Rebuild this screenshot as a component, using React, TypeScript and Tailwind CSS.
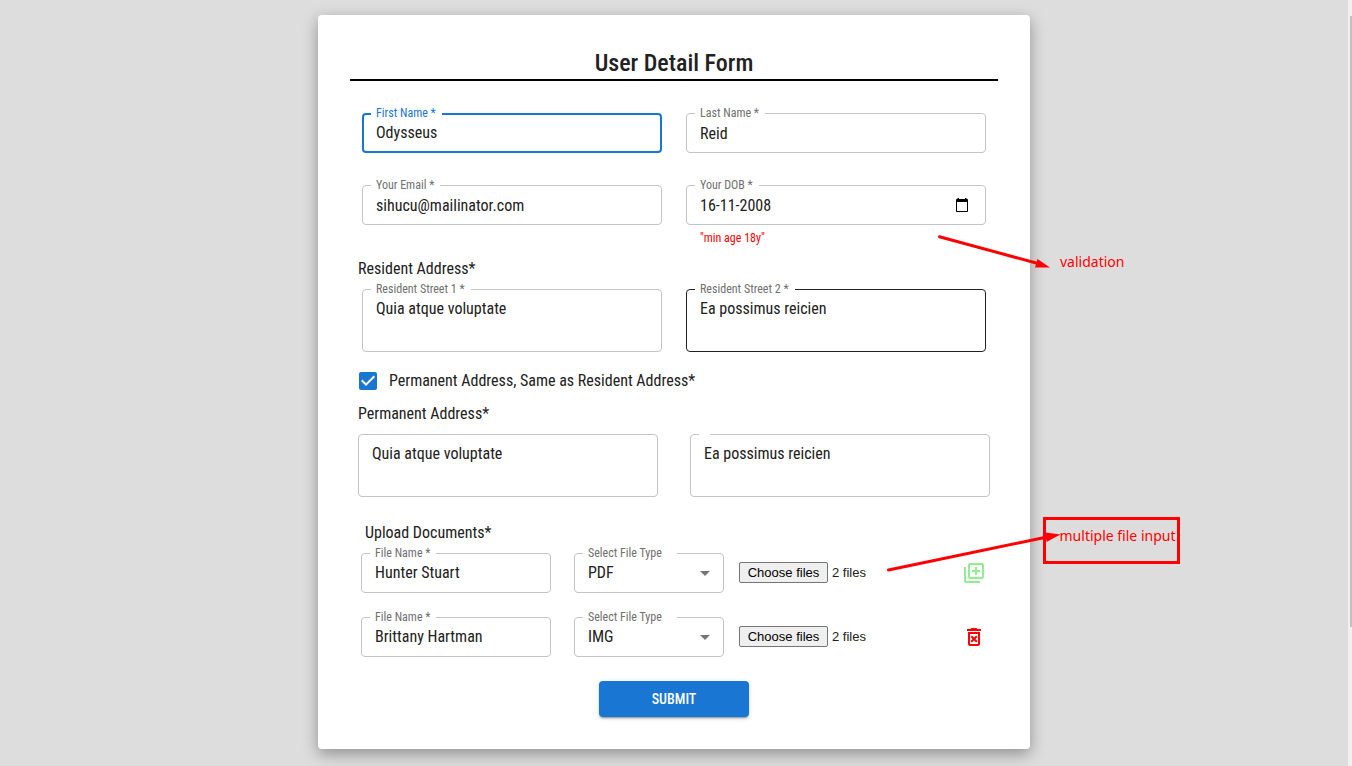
import { useId, type ReactNode } from 'react';
import { MdArrowDropDown, MdOutlineDeleteForever, MdOutlineLibraryAdd } from 'react-icons/md';

type Tone = 'idle' | 'focus' | 'hover';

const frameTone: Record<Tone, string> = {
  idle: 'border border-[#c4c4c4] px-2',
  focus: 'border-2 border-[#1976d2] px-[7px]',
  hover: 'border border-[#212121] px-2',
};

function Frame({
  id,
  label,
  tone = 'idle',
  wideNotch = false,
  children,
}: {
  id: string;
  label?: string;
  tone?: Tone;
  wideNotch?: boolean;
  children: ReactNode;
}) {
  return (
    <fieldset className={`min-w-0 rounded-[4px] ${frameTone[tone]}`}>
      {label !== undefined && (
        <legend
          className={`pl-[5px] text-xs leading-3 ${wideNotch ? 'pr-[15px]' : 'pr-[6px]'} ${
            tone === 'focus' ? 'h-[14px] text-[#1976d2]' : 'h-3 text-[#707070]'
          }`}
        >
          <label htmlFor={id} className="block">{label}</label>
        </legend>
      )}
      {children}
    </fieldset>
  );
}

function TextField({ label, value, tone, type = 'text' }: { label: string; value: string; tone?: Tone; type?: string }) {
  const id = useId();
  return (
    <Frame id={id} label={label} tone={tone}>
      <input
        id={id}
        type={type}
        defaultValue={value}
        className={`block w-full bg-transparent px-[5px] outline-none ${tone === 'focus' ? 'mb-1.5 h-6' : 'mb-[5px] h-7'}`}
      />
    </Frame>
  );
}

function DateField({ label, value }: { label: string; value: string }) {
  const id = useId();
  return (
    <Frame id={id} label={label}>
      <div className="mb-[5px] flex h-7 items-center pr-2">
        <input id={id} type="text" defaultValue={value} className="h-7 min-w-0 flex-1 bg-transparent px-[5px] outline-none" />
        <button type="button" aria-label="Open calendar" className="text-black">
          <svg width="14" height="14" viewBox="0 0 14 14" fill="currentColor" className="block">
            <path
              fillRule="evenodd"
              d="M2.500 0H4v1h6V0h1.500v1h.5c.6 0 1 .4 1 1v11c0 .6-.4 1-1 1H2c-.6 0-1-.4-1-1V2c0-.6.4-1 1-1h.5zM2 4v9h10V4z"
            />
          </svg>
        </button>
      </div>
    </Frame>
  );
}

function AreaField({ label, name, value, tone }: { label?: string; name: string; value: string; tone?: Tone }) {
  const id = useId();
  return (
    <Frame id={id} label={label} tone={tone}>
      <textarea
        id={id}
        aria-label={name}
        defaultValue={value}
        className={`block h-[54px] w-full resize-none bg-transparent px-[5px] leading-6 outline-none ${
          label === undefined ? 'mt-[7px]' : 'mt-[2px]'
        }`}
      />
    </Frame>
  );
}

function FileRow({ name, kind, action }: { name: string; kind: string; action: ReactNode }) {
  const nameId = useId();
  const kindId = useId();
  const fileId = useId();
  return (
    <div className="flex pl-[11px] pr-3">
      <div className="w-[190px]">
        <Frame id={nameId} label="File Name *">
          <input id={nameId} type="text" defaultValue={name} className="mb-[7px] block h-[26px] w-full bg-transparent px-[5px] outline-none" />
        </Frame>
      </div>
      <div className="ml-[23px] w-[150px]">
        <Frame id={kindId} label="Select File Type" wideNotch>
          <div className="relative">
            <select id={kindId} defaultValue={kind} className="mb-[5px] block h-7 w-full appearance-none bg-transparent px-[5px] outline-none">
              <option>PDF</option>
              <option>IMG</option>
            </select>
            <MdArrowDropDown className="pointer-events-none absolute -right-[2px] top-[2px] size-6 text-[#757575]" />
          </div>
        </Frame>
      </div>
      <div className="ml-[15px] mt-[5px] flex flex-1 items-center gap-1 font-['Liberation_Sans',sans-serif] text-[13px] leading-4">
        <input id={fileId} type="file" multiple className="sr-only" />
        <label htmlFor={fileId} className="flex h-[21px] w-[89px] items-center justify-center rounded-[2px] border border-[#767676] bg-[#efefef] text-black">
          Choose files
        </label>
        <span>2 files</span>
      </div>
      <div className="mt-1.5 flex items-center">{action}</div>
    </div>
  );
}

export default function App() {
  return (
    <div className="flex min-h-screen bg-[#dddddd] font-['Roboto_Condensed','Liberation_Sans_Narrow',sans-serif] text-base text-[#212121]">
      <main className="flex-1 pb-[17px] pt-[15px]">
        <div className="relative mx-auto w-full max-w-[712px] rounded-[4px] bg-white p-8 shadow-[0_5px_15px_rgba(0,0,0,0.35)]">
          <form>
            <h1 className="border-b-2 border-black text-center text-2xl font-medium leading-8">User Detail Form</h1>

            <div className="mt-[26px] grid grid-cols-2 gap-x-6 gap-y-[26px] px-3">
              <TextField label="First Name *" value="Odysseus" tone="focus" />
              <TextField label="Last Name *" value="Reid" />
              <TextField label="Your Email *" value="sihucu@mailinator.com" type="email" />
              <DateField label="Your DOB *" value="16-11-2008" />
            </div>
            <div className="mt-[3px] grid grid-cols-2 gap-x-6 px-3">
              <p className="col-start-2 pl-3.5 text-xs leading-5 text-[#ff0000]">"min age 18y"</p>
            </div>

            <h2 className="mt-[9px] px-2 leading-6">Resident Address*</h2>
            <div className="mt-[2px] grid grid-cols-2 gap-x-6 px-3">
              <AreaField label="Resident Street 1 *" name="Resident Street 1" value="Quia atque voluptate" />
              <AreaField label="Resident Street 2 *" name="Resident Street 2" value="Ea possimus reicien" tone="hover" />
            </div>

            <label className="mt-[17px] flex items-center gap-3 pl-[9px] leading-6">
              <span className="relative block size-[18px]">
                <input type="checkbox" defaultChecked className="peer block size-[18px] appearance-none rounded-[2px] border-2 border-[#666666] checked:border-[#1976d2] checked:bg-[#1976d2]" />
                <svg viewBox="3 3 18 18" className="pointer-events-none absolute inset-0 hidden size-[18px] fill-white peer-checked:block">
                  <path d="M10 17l-5-5 1.410-1.410L10 14.170l7.590-7.590L19 8z" />
                </svg>
              </span>
              Permanent Address, Same as Resident Address*
            </label>

            <h2 className="mt-[9px] px-2 leading-6">Permanent Address*</h2>
            <div className="mt-[2px] grid grid-cols-2 items-end gap-x-8 px-2">
              <AreaField name="Permanent Street 1" value="Quia atque voluptate" />
              <AreaField label="" name="Permanent Street 2" value="Ea possimus reicien" />
            </div>

            <h2 className="mt-6 px-[15px] leading-6">Upload Documents*</h2>
            <div className="mt-[2px] flex flex-col gap-[18px]">
              <FileRow
                name="Hunter Stuart"
                kind="PDF"
                action={
                  <button type="button" aria-label="Add document" className="text-[#90ee90]">
                    <MdOutlineLibraryAdd className="block size-6" />
                  </button>
                }
              />
              <FileRow
                name="Brittany Hartman"
                kind="IMG"
                action={
                  <button type="button" aria-label="Delete document" className="text-[#ff0000]">
                    <MdOutlineDeleteForever className="block size-6" />
                  </button>
                }
              />
            </div>

            <button
              type="submit"
              className="mx-auto mt-6 block h-9 w-[150px] rounded-[4px] bg-[#1976d2] text-sm font-medium text-white shadow-[0_3px_1px_-2px_rgba(0,0,0,0.2),0_2px_2px_rgba(0,0,0,0.14),0_1px_5px_rgba(0,0,0,0.12)]"
            >
              SUBMIT
            </button>
          </form>

          <svg width="112" height="34" viewBox="0 0 112 34" className="pointer-events-none absolute left-[620px] top-[220px] fill-[#ff0000]">
            <path d="M1.500 1.800L100 28.500" stroke="#ff0000" strokeWidth="3" strokeLinecap="round" />
            <path d="M112 32.500L97 32.500L99.500 24z" />
          </svg>
          <span className="absolute left-[742px] top-[237px] font-['Noto_Sans',sans-serif] text-sm leading-5 text-[#ff0000]">validation</span>

          <div className="absolute left-[725px] top-[502px] flex h-[47px] w-[137px] justify-center whitespace-nowrap border-[3px] border-[#ff0000] pl-3 pt-1.5 font-['Noto_Sans',sans-serif] text-sm leading-5 text-[#ff0000]">
            multiple file input
          </div>
          <svg width="174" height="42" viewBox="0 0 174 42" className="pointer-events-none absolute left-[569px] top-[515px] fill-[#ff0000]">
            <path d="M1.500 40L160 7" stroke="#ff0000" strokeWidth="3" strokeLinecap="round" />
            <path d="M173.500 4.500L158.500 2.500L159.500 12z" />
          </svg>
        </div>
      </main>
      <div aria-hidden="true" className="flex w-1 flex-col items-end bg-[#f1f1f1] pt-4">
        <div className="h-[611px] w-0.5 bg-[#c1c1c1]" />
      </div>
    </div>
  );
}
